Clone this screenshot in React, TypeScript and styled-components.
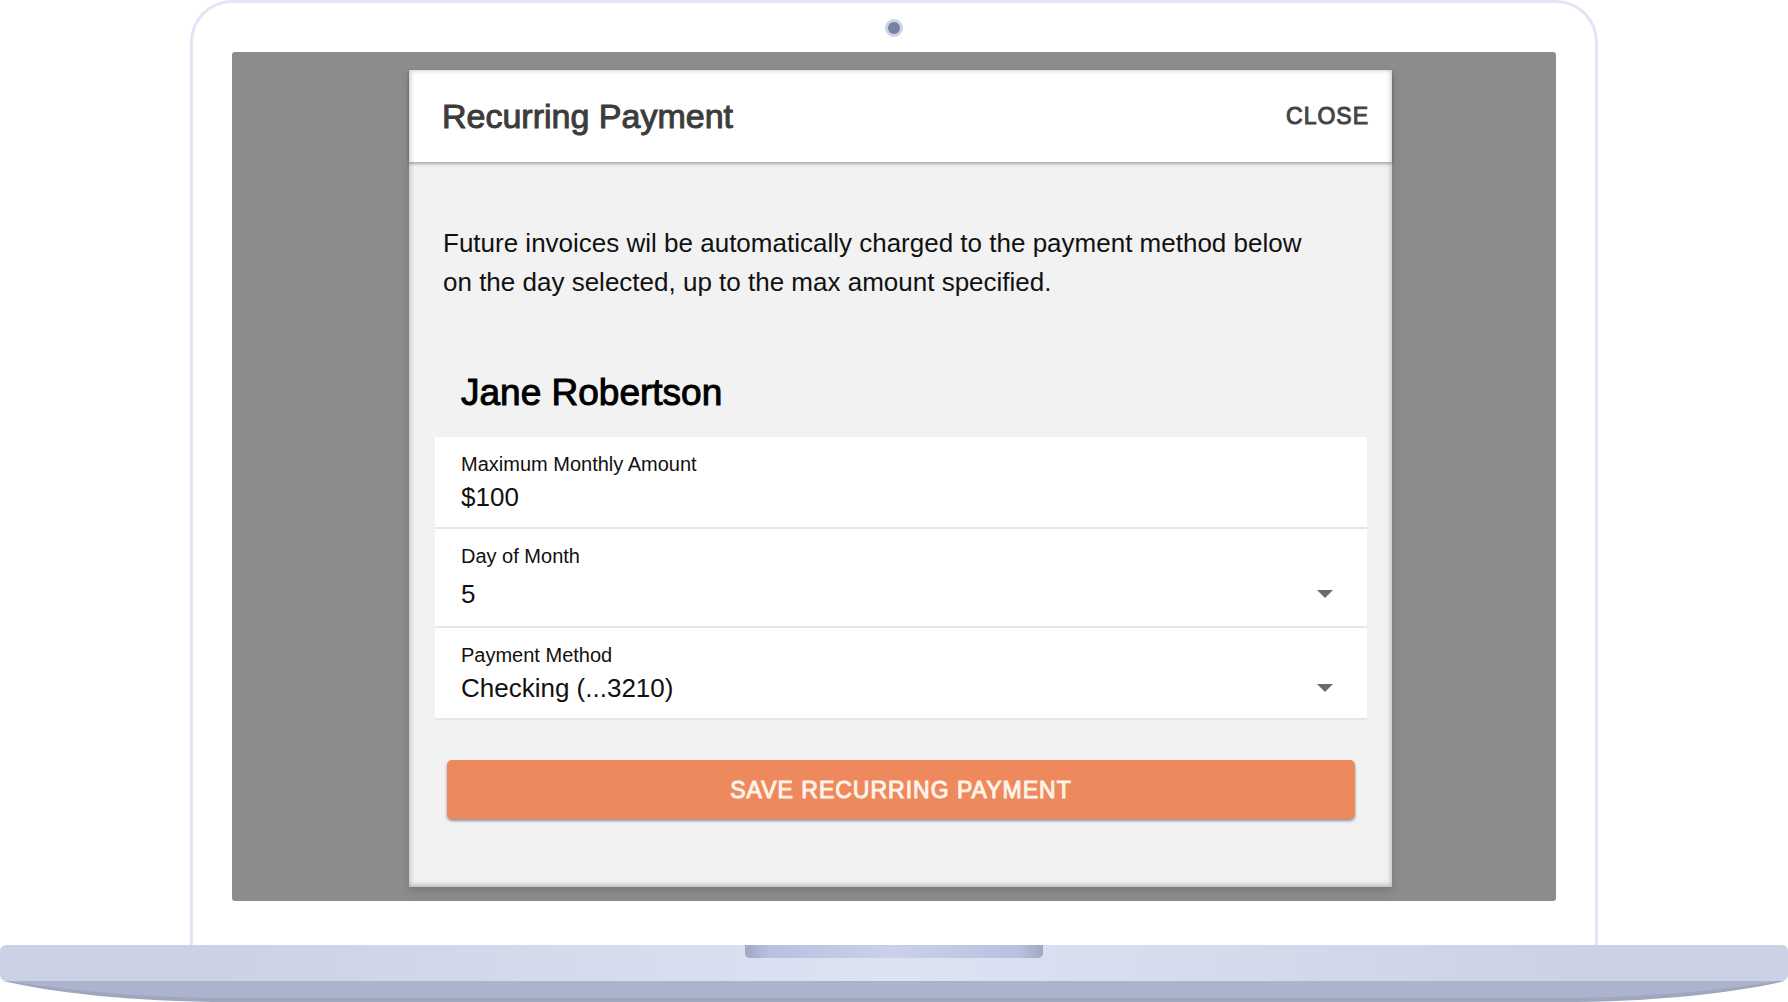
import React, { useState } from "react";
import styled, { createGlobalStyle } from "styled-components";

const GlobalStyle = createGlobalStyle`
  *, *::before, *::after { box-sizing: border-box; }
  body {
    margin: 0;
    background: #ffffff;
    color: #111111;
    font-family: "Liberation Sans", Arial, Helvetica, sans-serif;
  }
  button, input, select { font-family: inherit; }
`;

const Laptop = styled.main`
  display: flex;
  flex-direction: column;
  overflow: hidden;
`;

const Lid = styled.div`
  display: flex;
  flex-direction: column;
  margin: 0 190px;
  padding: 0 39px 44px;
  border: 3px solid #e0e6f5;
  border-bottom: 0;
  border-radius: 42px 42px 0 0;
  background: #ffffff;
`;

const CameraBar = styled.div`
  display: flex;
  align-items: center;
  justify-content: center;
  height: 49px;
`;

const Camera = styled.span`
  width: 18px;
  height: 18px;
  border: 3px solid #cbd2e8;
  border-radius: 50%;
  background: #77829f;
`;

const Screen = styled.div`
  padding: 18px 164px 14px 177px;
  border-radius: 3px;
  background: #8c8c8c;
`;

const Dialog = styled.section`
  background: #f2f2f2;
  box-shadow: 0 4px 8px rgba(0, 0, 0, 0.14);
  position: relative;

  &::after {
    content: "";
    position: absolute;
    inset: 0;
    pointer-events: none;
    box-shadow: inset 0 -1px 5px 1px rgba(0, 0, 0, 0.24);
  }
`;

const DialogHeader = styled.header`
  display: flex;
  align-items: center;
  justify-content: space-between;
  height: 92px;
  padding: 0 23px 0 33px;
  background: #ffffff;
  box-shadow: 0 2px 3px rgba(0, 0, 0, 0.3);
`;

const Title = styled.h1`
  margin: 0;
  font-size: 34px;
  line-height: 44px;
  font-weight: 400;
  color: #3c3c3c;
  -webkit-text-stroke: 1px #3c3c3c;
`;

const CloseButton = styled.button`
  padding: 0;
  border: 0;
  background: none;
  color: #444444;
  font-size: 23px;
  line-height: 28px;
  letter-spacing: 1px;
  -webkit-text-stroke: 1px #444444;
  cursor: pointer;
`;

const Form = styled.form`
  display: flex;
  flex-direction: column;
  padding: 62px 25px 68px 26px;
`;

const Intro = styled.p`
  margin: 0;
  padding: 0 44px 0 8px;
  font-size: 26px;
  line-height: 39px;
`;

const PayerName = styled.h2`
  margin: 69px 0 22px;
  padding: 0 26px;
  font-size: 37px;
  line-height: 44px;
  font-weight: 400;
  color: #000000;
  -webkit-text-stroke: 1px #000000;
`;

const Field = styled.div<{ $roomy?: boolean }>`
  display: flex;
  flex-direction: column;
  gap: ${({ $roomy }) => ($roomy ? 8 : 3)}px;
  padding: 15px 26px ${({ $roomy }) => ($roomy ? 14 : 12)}px;
  border-bottom: 2px solid #e6e6e6;
  background: #ffffff;
`;

const Label = styled.label`
  font-size: 20px;
  line-height: 24px;
`;

const Amount = styled.input`
  width: 100%;
  height: 36px;
  padding: 0;
  border: 0;
  outline: 0;
  background: none;
  color: #111111;
  font-size: 26px;
`;

const SelectRow = styled.div`
  display: flex;
  align-items: center;
  padding-right: 8px;
`;

const Select = styled.select`
  flex: 1;
  height: 36px;
  padding: 0;
  border: 0;
  outline: 0;
  appearance: none;
  background: none;
  color: #111111;
  font-size: 26px;
`;

const Arrow = styled.svg`
  width: 16px;
  height: 8px;
  fill: #6b6b6b;
  pointer-events: none;
`;

const SaveButton = styled.button`
  height: 59px;
  margin: 40px 12px 0;
  border: 0;
  border-radius: 5px;
  background: #ee895d;
  box-shadow: 0 2px 3px rgba(0, 0, 0, 0.4);
  color: #fff3ea;
  font-size: 23px;
  line-height: 28px;
  letter-spacing: 1px;
  -webkit-text-stroke: 1px #fff3ea;
  cursor: pointer;
`;

const Deck = styled.div`
  display: flex;
  justify-content: center;
  height: 36px;
  border-radius: 6px;
  background: linear-gradient(90deg, #ccd2e6 0%, #ccd2e6 12%, #dde3f3 50%, #ccd2e6 88%, #ccd2e6 100%);
`;

const Notch = styled.div`
  width: 298px;
  height: 13px;
  border-radius: 0 0 5px 5px;
  background: linear-gradient(90deg, #9fa8c0 0%, #b7c1df 8%, #cad1e9 50%, #b7c1df 92%, #9fa8c0 100%);
`;

const Underside = styled.svg`
  display: block;
  width: 100%;
  height: 21px;
`;

const days = Array.from({ length: 28 }, (_, index) => String(index + 1));

function DropArrow() {
  return (
    <Arrow viewBox="0 0 16 8" aria-hidden="true">
      <path d="M0 0H16L8 8Z" />
    </Arrow>
  );
}

export default function App() {
  const [amount, setAmount] = useState("$100");
  const [day, setDay] = useState("5");
  const [method, setMethod] = useState("Checking (...3210)");

  return (
    <>
      <GlobalStyle />
      <Laptop>
        <Lid>
          <CameraBar>
            <Camera />
          </CameraBar>
          <Screen>
            <Dialog role="dialog" aria-labelledby="dialog-title">
              <DialogHeader>
                <Title id="dialog-title">Recurring Payment</Title>
                <CloseButton type="button">CLOSE</CloseButton>
              </DialogHeader>
              <Form onSubmit={(event) => event.preventDefault()}>
                <Intro>
                  Future invoices wil be automatically charged to the payment method below on the day
                  selected, up to the max amount specified.
                </Intro>
                <PayerName>Jane Robertson</PayerName>
                <Field>
                  <Label htmlFor="amount">Maximum Monthly Amount</Label>
                  <Amount id="amount" value={amount} onChange={(event) => setAmount(event.target.value)} />
                </Field>
                <Field $roomy>
                  <Label htmlFor="day">Day of Month</Label>
                  <SelectRow>
                    <Select id="day" value={day} onChange={(event) => setDay(event.target.value)}>
                      {days.map((value) => (
                        <option key={value}>{value}</option>
                      ))}
                    </Select>
                    <DropArrow />
                  </SelectRow>
                </Field>
                <Field>
                  <Label htmlFor="method">Payment Method</Label>
                  <SelectRow>
                    <Select id="method" value={method} onChange={(event) => setMethod(event.target.value)}>
                      <option>Checking (...3210)</option>
                    </Select>
                    <DropArrow />
                  </SelectRow>
                </Field>
                <SaveButton type="submit">SAVE RECURRING PAYMENT</SaveButton>
              </Form>
            </Dialog>
          </Screen>
        </Lid>
        <Deck>
          <Notch />
        </Deck>
        <Underside viewBox="0 0 1788 21" preserveAspectRatio="none" aria-hidden="true">
          <path d="M3 0C50 11 130 21 230 21H1558C1658 21 1738 11 1785 0Z" fill="#9fa7be" />
          <path d="M8 0C70 10 150 17 230 17H1558C1638 17 1718 10 1780 0Z" fill="#acb3ce" />
        </Underside>
      </Laptop>
    </>
  );
}
